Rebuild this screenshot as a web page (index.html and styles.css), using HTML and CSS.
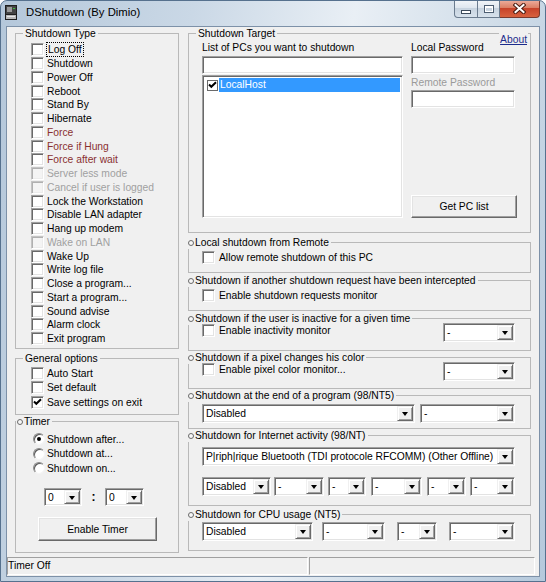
FILE: index.html
```html
<!DOCTYPE html>
<html>
<head>
<meta charset="utf-8">
<title>DShutdown (By Dimio)</title>
<link rel="stylesheet" href="styles.css">
</head>
<body>
<div class="window">
  <div class="titlebar">
    <svg class="appicon" width="12" height="15" viewBox="0 0 12 15">
      <rect x="0" y="0" width="12" height="15" fill="#1e1e1e"/>
      <rect x="1" y="1" width="10" height="8" fill="#444"/>
      <rect x="2" y="2" width="5" height="5" fill="#9a9a9a"/>
      <rect x="8" y="3" width="2" height="1" fill="#3fbf3f"/>
      <rect x="1" y="10" width="10" height="4" fill="#b8b8b8"/>
      <rect x="2" y="11" width="8" height="1" fill="#e6e6e6"/>
    </svg>
    <span class="title">DShutdown (By Dimio)</span>
    <div class="capbtns">
      <span class="cap cap-min"><span class="g-min"></span></span>
      <span class="cap cap-max"><span class="g-max"></span></span>
      <span class="cap cap-close"><svg width="13" height="11" viewBox="0 0 13 11"><path d="M2.5 2 L10.5 9 M10.5 2 L2.5 9" stroke="#4a1c12" stroke-width="4" stroke-linecap="square"/><path d="M2.5 2 L10.5 9 M10.5 2 L2.5 9" stroke="#fff" stroke-width="2" stroke-linecap="square"/></svg></span>
    </div>
  </div>
  <div class="client">
    <div class="main">
      <div class="leftcol">
        <fieldset class="grp g-type">
          <legend>Shutdown Type</legend>
          <div class="rows">
            <div class="chk"><span class="cb"></span><span class="lbl focus">Log Off</span></div>
            <div class="chk"><span class="cb"></span><span class="lbl">Shutdown</span></div>
            <div class="chk"><span class="cb"></span><span class="lbl">Power Off</span></div>
            <div class="chk"><span class="cb"></span><span class="lbl">Reboot</span></div>
            <div class="chk"><span class="cb"></span><span class="lbl">Stand By</span></div>
            <div class="chk"><span class="cb"></span><span class="lbl">Hibernate</span></div>
            <div class="chk red"><span class="cb"></span><span class="lbl">Force</span></div>
            <div class="chk red"><span class="cb"></span><span class="lbl">Force if Hung</span></div>
            <div class="chk red"><span class="cb"></span><span class="lbl">Force after wait</span></div>
            <div class="chk dis"><span class="cb"></span><span class="lbl">Server less mode</span></div>
            <div class="chk dis"><span class="cb"></span><span class="lbl">Cancel if user is logged</span></div>
            <div class="chk"><span class="cb"></span><span class="lbl">Lock the Workstation</span></div>
            <div class="chk"><span class="cb"></span><span class="lbl">Disable LAN adapter</span></div>
            <div class="chk"><span class="cb"></span><span class="lbl">Hang up modem</span></div>
            <div class="chk dis"><span class="cb"></span><span class="lbl">Wake on LAN</span></div>
            <div class="chk"><span class="cb"></span><span class="lbl">Wake Up</span></div>
            <div class="chk"><span class="cb"></span><span class="lbl">Write log file</span></div>
            <div class="chk"><span class="cb"></span><span class="lbl">Close a program...</span></div>
            <div class="chk"><span class="cb"></span><span class="lbl">Start a program...</span></div>
            <div class="chk"><span class="cb"></span><span class="lbl">Sound advise</span></div>
            <div class="chk"><span class="cb"></span><span class="lbl">Alarm clock</span></div>
            <div class="chk"><span class="cb"></span><span class="lbl">Exit program</span></div>
          </div>
        </fieldset>
        <fieldset class="grp g-gen">
          <legend>General options</legend>
          <div class="rows">
            <div class="chk"><span class="cb"></span><span class="lbl">Auto Start</span></div>
            <div class="chk"><span class="cb"></span><span class="lbl">Set default</span></div>
            <div class="chk"><span class="cb"><svg width="9" height="9" viewBox="0 0 9 9"><path d="M1 3.5 L3.3 5.8 L8 1.2" fill="none" stroke="#000" stroke-width="2"/></svg></span><span class="lbl">Save settings on exit</span></div>
          </div>
        </fieldset>
        <fieldset class="grp g-timer">
          <legend class="leg-ring"><span class="ring"></span>Timer</legend>
          <div class="rows">
            <div class="radrow"><span class="rad on"></span><span class="lbl">Shutdown after...</span></div>
            <div class="radrow"><span class="rad"></span><span class="lbl">Shutdown at...</span></div>
            <div class="radrow"><span class="rad"></span><span class="lbl">Shutdown on...</span></div>
          </div>
          <div class="timerow">
            <div class="combo t-c1"><span class="val">0</span><span class="dd"></span></div>
            <span class="colon">:</span>
            <div class="combo t-c2"><span class="val">0</span><span class="dd"></span></div>
          </div>
          <div class="btn enable">Enable Timer</div>
        </fieldset>
      </div>
      <div class="rightcol">
        <fieldset class="grp g-target">
          <legend>Shutdown Target</legend>
          <a class="about" href="#">About</a>
          <div class="target">
            <div class="tcol1">
              <div class="lbl-row">List of PCs you want to shutdown</div>
              <div class="edit e-name"></div>
              <div class="listbox">
                <div class="item"><span class="lcb"><svg width="9" height="9" viewBox="0 0 9 9"><path d="M1 3.5 L3.3 5.8 L8 1.2" fill="none" stroke="#000" stroke-width="2"/></svg></span><span class="sel">LocalHost</span></div>
              </div>
            </div>
            <div class="tcol2">
              <div class="lbl-row">Local Password</div>
              <div class="edit e-pw"></div>
              <div class="lbl-row gray rp">Remote Password</div>
              <div class="edit e-pw e-rpw"></div>
              <div class="btn getpc">Get PC list</div>
            </div>
          </div>
        </fieldset>

        <fieldset class="grp rg g-local">
          <legend class="leg-r"><span class="ring"></span>Local shutdown from Remote</legend>
          <div class="rg-body">
            <div class="chk"><span class="cb"></span><span class="lbl">Allow remote shutdown of this PC</span></div>
          </div>
        </fieldset>

        <fieldset class="grp rg g-intercept">
          <legend class="leg-r"><span class="ring"></span>Shutdown if another shutdown request have been intercepted</legend>
          <div class="rg-body">
            <div class="chk"><span class="cb"></span><span class="lbl">Enable shutdown requests monitor</span></div>
          </div>
        </fieldset>

        <fieldset class="grp rg g-inactive">
          <legend class="leg-r"><span class="ring"></span>Shutdown if the user is inactive for a given time</legend>
          <div class="crow">
            <div class="chk"><span class="cb"></span><span class="lbl">Enable inactivity monitor</span></div>
            <div class="combo c-small"><span class="val">-</span><span class="dd"></span></div>
          </div>
        </fieldset>

        <fieldset class="grp rg g-pixel">
          <legend class="leg-r"><span class="ring"></span>Shutdown if a pixel changes his color</legend>
          <div class="crow">
            <div class="chk"><span class="cb"></span><span class="lbl">Enable pixel color monitor...</span></div>
            <div class="combo c-small"><span class="val">-</span><span class="dd"></span></div>
          </div>
        </fieldset>

        <fieldset class="grp rg g-end">
          <legend class="leg-r"><span class="ring"></span>Shutdown at the end of a program (98/NT5)</legend>
          <div class="comborow">
            <div class="combo w-end1"><span class="val">Disabled</span><span class="dd"></span></div>
            <div class="combo w-end2"><span class="val">-</span><span class="dd"></span></div>
          </div>
        </fieldset>

        <fieldset class="grp rg g-net">
          <legend class="leg-r"><span class="ring"></span>Shutdown for Internet activity (98/NT)</legend>
          <div class="comborow">
            <div class="combo w-full"><span class="val">P|riph|rique Bluetooth (TDI protocole RFCOMM) (Other Offline)</span><span class="dd"></span></div>
          </div>
          <div class="comborow net-row">
            <div class="combo n1"><span class="val">Disabled</span><span class="dd"></span></div>
            <div class="combo n2"><span class="val">-</span><span class="dd"></span></div>
            <div class="combo n3"><span class="val">-</span><span class="dd"></span></div>
            <div class="combo n4"><span class="val">-</span><span class="dd"></span></div>
            <div class="combo n5"><span class="val">-</span><span class="dd"></span></div>
            <div class="combo n6"><span class="val">-</span><span class="dd"></span></div>
          </div>
        </fieldset>

        <fieldset class="grp rg g-cpu">
          <legend class="leg-r"><span class="ring"></span>Shutdown for CPU usage (NT5)</legend>
          <div class="comborow">
            <div class="combo u1"><span class="val">Disabled</span><span class="dd"></span></div>
            <div class="combo u2"><span class="val">-</span><span class="dd"></span></div>
            <div class="combo u3"><span class="val">-</span><span class="dd"></span></div>
            <div class="combo u4"><span class="val">-</span><span class="dd"></span></div>
          </div>
        </fieldset>
      </div>
    </div>
    <div class="status">
      <div class="panel p1">Timer Off</div>
      <div class="panel p2"></div>
    </div>
  </div>
</div>
</body>
</html>
```
FILE: styles.css
```css
* { box-sizing: border-box; }
html, body { margin: 0; padding: 0; background: #fff; }
body {
  font-family: "Liberation Sans", Arial, sans-serif;
  font-size: 10.3px;
  color: #000;
}

/* window frame */
.window {
  width: 546px;
  height: 582px;
  display: flex;
  flex-direction: column;
  border: 1px solid #56718e;
  border-radius: 7px 7px 0 0;
  background: linear-gradient(100deg, #b4c7da 0%, #cad8e6 30%, #e9eff5 55%, #d3dfea 75%, #b5c9dc 100%);
  overflow: hidden;
}
.titlebar {
  height: 25px;
  flex: none;
  display: flex;
  align-items: flex-start;
}
.appicon { margin: 4px 0 0 4px; flex: none; }
.title {
  margin: 4px 0 0 9px;
  font-size: 11.3px;
  line-height: 15px;
  color: #000;
}
.capbtns {
  margin-left: auto;
  margin-right: 5px;
  margin-top: -1px;
  display: flex;
}
.cap {
  height: 18px;
  display: flex;
  align-items: center;
  justify-content: center;
  border: 1px solid #6a7b8e;
  border-top: none;
  background: linear-gradient(#f3f6f9 0%, #dfe7ef 45%, #c7d3df 50%, #d7e2ec 100%);
}
.cap-min { width: 24px; border-radius: 0 0 0 4px; }
.cap-max { width: 22px; border-left: none; }
.cap-close {
  width: 40px;
  border-left: none;
  border-color: #7a3a2e;
  border-radius: 0 0 4px 0;
  background: linear-gradient(#eeb0a0 0%, #dc8066 45%, #c7432a 50%, #d8623e 100%);
}
.g-min {
  width: 10px;
  height: 4px;
  margin-top: 6px;
  border: 1px solid #3c4b5c;
  background: #fff;
}
.g-max {
  width: 10px;
  height: 8px;
  border: 1px solid #4d5e72;
  box-shadow: inset 0 0 0 1px #fff, inset 0 2px 0 #fff;
}

/* client */
.client {
  flex: 1;
  margin: 0 5px 4px;
  border: 1px solid #7d91a8;
  background: #f0f0f0;
  display: flex;
  flex-direction: column;
}
.main { height: 529px; flex: none; display: flex; }
.leftcol { width: 164px; margin-left: 8px; display: flex; flex-direction: column; }
.rightcol { width: 343px; margin-left: 9px; display: flex; flex-direction: column; }

/* group boxes */
.grp {
  margin: 0;
  padding: 0;
  min-width: 0;
  border: 1px solid #b9b9b9;
}
legend {
  padding: 0 2px;
  margin-left: 7px;
  line-height: 13px;
}
.leg-r { margin-left: -1px; padding: 0 2px 0 0; }
.leg-ring { margin-left: 0; padding: 0 2px 0 1px; }
.ring {
  display: inline-block;
  width: 6px;
  height: 6px;
  border: 1px solid #6a6a6a;
  border-radius: 50%;
  background: #f7f7f7;
  margin-right: 1px;
  vertical-align: 0;
}

/* checkbox rows */
.chk { display: flex; align-items: center; height: 13.75px; }
.cb {
  width: 13px;
  height: 13px;
  flex: none;
  display: flex;
  align-items: center;
  justify-content: center;
  background: #fff;
  border: 1px solid;
  border-color: #a0a0a0 #fff #fff #a0a0a0;
  box-shadow: inset 1px 1px #696969, inset -1px -1px #e3e3e3;
}
.lbl { white-space: nowrap; line-height: 13px; }
.focus { outline: 1px dotted #000; outline-offset: 0; padding: 0 1px; margin-left: -1px; }
.red .lbl { color: #8a3030; }
.dis .lbl { color: #a0a0a0; }
.dis .cb { background: #f4f4f4; border-color: #c4c4c4 #fff #fff #c4c4c4; box-shadow: inset 1px 1px #b0b0b0, inset -1px -1px #ececec; }

.g-type { height: 322px; }
.g-type .rows { padding-top: 3px; }
.leftcol .chk .cb { margin-left: 15px; }
.leftcol .chk .lbl { margin-left: 3px; }

.g-gen { height: 63px; margin-top: 3px; }
.g-gen .rows { padding-top: 1px; }
.g-gen .chk { height: 14.5px; }

.g-timer { height: 138px; }
.g-timer .rows { padding-top: 4px; }
.radrow { display: flex; align-items: center; height: 14.5px; }
.rad {
  width: 12px;
  height: 12px;
  flex: none;
  margin-left: 17px;
  border-radius: 50%;
  background: #fff;
  border: 1px solid;
  border-color: #8a8a8a #f4f4f4 #f4f4f4 #8a8a8a;
  box-shadow: inset 1px 1px #5a5a5a;
  display: flex;
  align-items: center;
  justify-content: center;
}
.rad.on::after {
  content: "";
  width: 4px;
  height: 4px;
  border-radius: 50%;
  background: #000;
}
.radrow .lbl { margin-left: 2px; }
.timerow { display: flex; align-items: center; margin-top: 12.5px; margin-left: 28px; }
.timerow .combo { height: 18px; }
.t-c1 { width: 38px; }
.t-c2 { width: 39px; }
.colon { width: 23px; text-align: center; font-weight: bold; font-size: 12px; }
.enable { width: 119px; height: 24px; margin: 11px 0 0 22px; }

/* controls */
.combo {
  height: 19px;
  flex: none;
  display: flex;
  padding: 1px;
  background: #fff;
  border: 1px solid;
  border-color: #a0a0a0 #fff #fff #a0a0a0;
  box-shadow: inset 1px 1px #696969, inset -1px -1px #e3e3e3;
}
.combo .val {
  flex: 1;
  min-width: 0;
  padding-left: 2px;
  line-height: 15px;
  white-space: nowrap;
  overflow: hidden;
}
.combo .dd {
  width: 16px;
  flex: none;
  background: #f0f0f0;
  border: 1px solid;
  border-color: #f0f0f0 #696969 #696969 #f0f0f0;
  box-shadow: inset 1px 1px #fff, inset -1px -1px #a0a0a0;
  display: flex;
  align-items: center;
  justify-content: center;
}
.combo .dd::after {
  content: "";
  border-left: 3.5px solid transparent;
  border-right: 3.5px solid transparent;
  border-top: 4px solid #000;
  margin-top: 1px;
}
.edit {
  height: 18px;
  background: #fff;
  border: 1px solid;
  border-color: #a0a0a0 #fff #fff #a0a0a0;
  box-shadow: inset 1px 1px #696969, inset -1px -1px #e3e3e3;
}
.btn {
  display: flex;
  align-items: center;
  justify-content: center;
  background: #f0f0f0;
  border: 1px solid;
  border-color: #fff #696969 #696969 #fff;
  box-shadow: inset -1px -1px #a0a0a0, inset 1px 1px #e3e3e3;
}

/* shutdown target */
.g-target { height: 206px; position: relative; }
.about {
  position: absolute;
  top: -7px;
  right: 2px;
  color: #1c2c8c;
  text-decoration: underline;
  line-height: 13px;
  background: #f0f0f0;
  padding: 0 1px;
}
.target { display: flex; padding: 1px 0 0 13px; }
.tcol1 { width: 201px; display: flex; flex-direction: column; }
.tcol2 { width: 106px; margin-left: 8px; display: flex; flex-direction: column; }
.lbl-row { height: 13px; line-height: 13px; white-space: nowrap; }
.gray { color: #9a9a9a; }
.e-name { margin-top: 2px; }
.listbox {
  margin-top: 1px;
  height: 143px;
  padding: 2px;
  background: #fff;
  border: 1px solid;
  border-color: #a0a0a0 #fff #fff #a0a0a0;
  box-shadow: inset 1px 1px #696969, inset -1px -1px #e3e3e3;
}
.item { display: flex; align-items: center; height: 14px; }
.lcb {
  width: 11px;
  height: 11px;
  margin-left: 2px;
  flex: none;
  background: #fff;
  border: 1px solid #6a6a6a;
  display: flex;
  align-items: center;
  justify-content: center;
}
.sel {
  flex: 1;
  margin-left: 1px;
  height: 14px;
  line-height: 14px;
  padding-left: 1px;
  background: #3399ff;
  color: #fff;
}
.e-pw { width: 104px; margin-top: 2px; }
.rp { margin-top: 2px; }
.e-rpw { margin-top: 1px; }
.getpc { height: 23px; margin-top: auto; }

/* right small groups */
.rg-body { padding-top: 1px; }
.rg .chk { height: 14px; }
.rg .chk .cb { margin-left: 13px; }
.rg .chk .lbl { margin-left: 4px; }
.g-local { height: 37px; margin-top: 3px; }
.g-intercept { height: 37px; margin-top: 1px; }
.g-inactive { height: 39px; margin-top: 1px; }
.g-pixel { height: 38px; }
.crow { display: flex; align-items: flex-start; margin-top: -2px; }
.c-small { width: 72px; margin-left: auto; margin-right: 15px; }
.comborow { display: flex; padding-left: 13px; }
.g-end { height: 40px; }
.g-end .comborow { padding-top: 2px; }
.w-end1 { width: 213px; }
.w-end2 { width: 95px; margin-left: 5px; }
.g-net { height: 77px; }
.g-net .comborow:first-of-type { padding-top: 5px; }
.w-full { width: 313px; }
.net-row { margin-top: 11px; }
.n1 { width: 69px; }
.n2 { width: 50px; margin-left: 3px; }
.n3 { width: 38px; margin-left: 4px; }
.n4 { width: 51px; margin-left: 5px; }
.n5 { width: 39px; margin-left: 5px; }
.n6 { width: 45px; margin-left: 4px; }
.g-cpu { height: 43px; margin-top: 2px; }
.g-cpu .comborow { padding-top: 1px; }
.u1 { width: 111px; }
.u2 { width: 63px; margin-left: 9px; }
.u3 { width: 40px; margin-left: 12px; }
.u4 { width: 66px; margin-left: 12px; }

/* status bar */
.status { flex: 1; display: flex; padding-top: 1px; }
.panel {
  height: 18px;
  line-height: 16px;
  border: 1px solid;
  border-color: #a0a0a0 #fff #fff #a0a0a0;
}
.p1 { width: 301px; padding-left: 0; }
.p2 { flex: 1; margin-left: 1px; margin-right: 4px; }
```
